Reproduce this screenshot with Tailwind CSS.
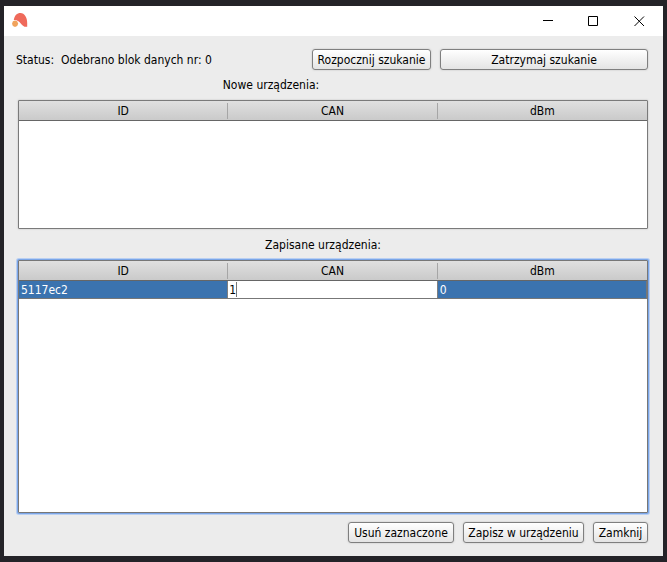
<!DOCTYPE html>
<html lang="pl">
<head>
<meta charset="utf-8">
<meta name="viewport" content="width=device-width, initial-scale=1">
<title>Urządzenia</title>
<script src="https://cdn.jsdelivr.net/npm/@tailwindcss/browser@4"></script>
</head>
<body class="h-screen flex flex-col bg-[#242328] pt-1.5 px-1 pb-1.5 font-['DejaVu_Sans_Condensed','DejaVu_Sans',sans-serif] text-[12px] leading-4 text-black">
<div class="flex-1 flex flex-col min-h-0 bg-[#ececec]">
  <header class="h-[30px] shrink-0 flex items-center justify-between bg-white pl-2">
    <svg class="size-4" viewBox="0 0 16 16" aria-hidden="true">
      <path d="M1.800 7C2.500 2.500 5 0 8.500 0c4 0 6.700 4.500 6.700 10v3.800h-2.700C9.800 12.500 8.500 9.500 6 8 4.800 7.200 3.500 6.800 1.800 7z" fill="#ef6a5b"/>
      <path d="M3 7.600l2.200.7 1 2.400-1 2.400L3 14l-2.100-.9-.9-2.400.9-2.400z" fill="#f0a35c"/>
    </svg>
    <div class="flex h-full">
      <button aria-label="Minimalizuj" class="w-[45px] h-full flex items-center justify-center"><svg class="w-[11px] h-[11px]" viewBox="0 0 11 11"><path d="M0 4.500h10" stroke="#000"/></svg></button>
      <button aria-label="Maksymalizuj" class="w-[45px] h-full flex items-center justify-center"><svg class="w-[11px] h-[11px]" viewBox="0 0 11 11"><path d="M.5.500h9v9h-9z" fill="none" stroke="#000"/></svg></button>
      <button aria-label="Zamknij okno" class="w-[47px] h-full flex items-center justify-center"><svg class="w-[11px] h-[11px]" viewBox="0 0 11 11"><path d="M.5.500l9.500 9.500M10 .500l-9.500 9.500" stroke="#000"/></svg></button>
    </div>
  </header>
  <main class="flex-1 flex flex-col min-h-0 pt-[13px] pb-[13px] pl-3.5 pr-[15px]">
    <div class="flex items-center gap-[9px]">
      <p class="flex-1 flex gap-[7px] -ml-0.5 whitespace-nowrap"><span>Status:</span><span>Odebrano blok danych nr: 0</span></p>
      <button class="h-[21px] w-[119px] whitespace-nowrap rounded-[3px] border border-[#7f7f7f] bg-linear-to-b from-white to-[#e4e4e4] shadow-[0_0_2px_#bbb]">Rozpocznij szukanie</button>
      <button class="h-[21px] w-[208px] whitespace-nowrap rounded-[3px] border border-[#7f7f7f] bg-linear-to-b from-white to-[#e4e4e4] shadow-[0_0_2px_#bbb]">Zatrzymaj szukanie</button>
    </div>
    <h2 id="new" class="mt-[7px] pr-[124px] text-center">Nowe urządzenia:</h2>
    <div class="mt-[7px] h-[129px] shrink-0 bg-white border border-[#7a7a7a] rounded-[1px] shadow-[0_0_2px_#bbb]">
      <table aria-labelledby="new" class="w-full table-fixed border-separate border-spacing-0">
        <thead><tr class="h-5 bg-linear-to-b from-[#e0e0e0] to-[#c9c9c9]">
          <th class="p-0 font-normal border-b border-[#666]"><div class="border-r border-[#a6a6a6]">ID</div></th>
          <th class="p-0 font-normal border-b border-[#666]"><div class="border-r border-[#a6a6a6]">CAN</div></th>
          <th class="p-0 font-normal border-b border-[#666]">dBm</th>
        </tr></thead>
        <tbody></tbody>
      </table>
    </div>
    <h2 id="saved" class="mt-2 pr-5 text-center">Zapisane urządzenia:</h2>
    <div class="mt-[7px] flex-1 min-h-0 bg-white border border-[#777] rounded-[1px] shadow-[0_0_0_1px_#7ba6e8,0_0_0_2px_#b9cff2]">
      <table aria-labelledby="saved" class="w-full table-fixed border-separate border-spacing-0">
        <thead><tr class="h-5 bg-linear-to-b from-[#e0e0e0] to-[#c9c9c9]">
          <th class="p-0 font-normal border-b border-[#666]"><div class="border-r border-[#a6a6a6]">ID</div></th>
          <th class="p-0 font-normal border-b border-[#666]"><div class="border-r border-[#a6a6a6]">CAN</div></th>
          <th class="p-0 font-normal border-b border-[#666]">dBm</th>
        </tr></thead>
        <tbody><tr class="h-[18px] bg-[#3b73af] text-white">
          <td class="p-0 pl-0.5 border-b border-[#777]">5117ec2</td>
          <td class="p-0 border-b border-[#777]"><div class="relative h-[17px] bg-white border-x border-[#7f7f7f] -ml-px">
            <input aria-label="CAN" value="1" class="block w-full h-full pl-px text-black outline-none">
            <span class="absolute left-2 top-px h-[15px] w-px bg-[#777]"></span>
          </div></td>
          <td class="p-0 pl-0.5 border-b border-r border-[#777]">0</td>
        </tr></tbody>
      </table>
    </div>
    <footer class="mt-[9px] flex justify-end gap-[9px]">
      <button class="h-[21px] w-[106px] whitespace-nowrap rounded-[3px] border border-[#7f7f7f] bg-linear-to-b from-white to-[#e4e4e4] shadow-[0_0_2px_#bbb]">Usuń zaznaczone</button>
      <button class="h-[21px] w-[121px] whitespace-nowrap rounded-[3px] border border-[#7f7f7f] bg-linear-to-b from-white to-[#e4e4e4] shadow-[0_0_2px_#bbb]">Zapisz w urządzeniu</button>
      <button class="h-[21px] w-[55px] whitespace-nowrap rounded-[3px] border border-[#7f7f7f] bg-linear-to-b from-white to-[#e4e4e4] shadow-[0_0_2px_#bbb]">Zamknij</button>
    </footer>
  </main>
</div>
</body>
</html>
